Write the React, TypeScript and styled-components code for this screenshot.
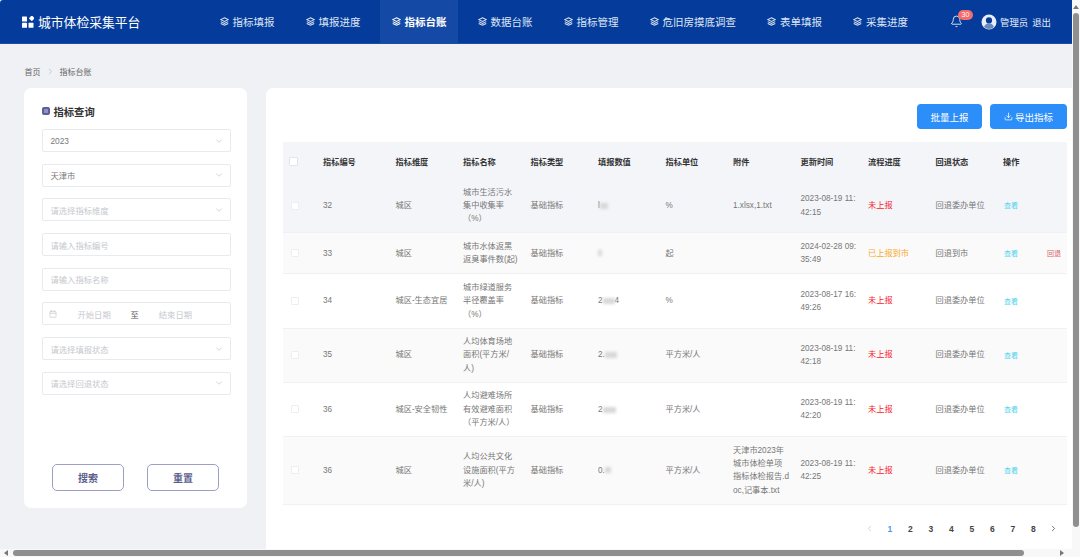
import React from 'react'
import styled, { createGlobalStyle } from 'styled-components'
import { Bell, ChevronDown, ChevronLeft, ChevronRight, Calendar, Download } from 'lucide-react'

const GlobalStyle = createGlobalStyle`
    html, body {
        margin: 0;
        padding: 0;
        background: #fff;
        overflow: hidden;
    }
    * {
        box-sizing: border-box;
    }
    body {
        font-family: "Liberation Sans", "Noto Sans CJK SC", sans-serif;
    }
`

const Screen = styled.div`
    display: grid;
    grid-template-columns: 1fr 8px;
    grid-template-rows: 549px 8px;
    width: 1080px;
    height: 557px;
    overflow: hidden;
`

const Page = styled.div`
    background: #f0f1f4;
    display: flex;
    flex-direction: column;
    min-width: 0;
`

const Header = styled.header`
    align-items: stretch;
    background: #053c9b;
    border-bottom: 1px solid #1a4fa8;
    border-top-left-radius: 3px;
    display: flex;
    flex: none;
    height: 44px;
`

const Brand = styled.div`
    align-items: center;
    color: #fff;
    display: flex;
    font-size: 12.8px;
    gap: 4px;
    padding-left: 22px;
    width: 208px;
`

const Nav = styled.nav`
    display: flex;
    gap: 8px;
`

const NavItem = styled.a<{ $active?: boolean }>`
    align-items: center;
    background: ${({ $active }) => ($active ? '#1549a6' : 'transparent')};
    color: ${({ $active }) => ($active ? '#fff' : '#dfe6f3')};
    display: flex;
    font-size: 10.5px;
    font-weight: ${({ $active }) => ($active ? 700 : 400)};
    gap: 4px;
    padding: 0 11.5px;
    white-space: nowrap;
`

const HeaderRight = styled.div`
    align-items: center;
    color: #e6ebf5;
    display: flex;
    font-size: 9.4px;
    margin-left: 30.5px;
`

const BellWrap = styled.div`
    color: #fff;
    display: flex;
    margin-right: 18px;
    position: relative;
`

const Badge = styled.span`
    background: #f56c6c;
    border-radius: 6px;
    color: #fff;
    font-size: 7px;
    height: 10px;
    left: 8px;
    line-height: 10px;
    position: absolute;
    text-align: center;
    top: -5px;
    width: 15px;
`

const UserName = styled.span`
    margin: 0 4px 0 3px;
`

const Breadcrumb = styled.div`
    align-items: center;
    color: #666;
    display: flex;
    flex: none;
    font-size: 8px;
    gap: 5px;
    height: 44px;
    padding: 10px 0 0 24.5px;
`

const Content = styled.div`
    display: flex;
    flex: 1;
    gap: 19px;
    min-height: 0;
    padding-left: 24px;
`

const Sidebar = styled.aside`
    background: #fff;
    border-radius: 7px;
    display: flex;
    flex: none;
    flex-direction: column;
    height: 420px;
    padding: 16px 16px 17px 17.5px;
    width: 223px;
`

const SideTitle = styled.h2`
    align-items: center;
    color: #333;
    display: flex;
    font-size: 10.3px;
    font-weight: 700;
    gap: 4px;
    height: 14px;
    margin: 0 0 11px;
`

const TitleMark = styled.span`
    background: #8f92c0;
    border: 2px solid #5a5e9c;
    border-radius: 2px;
    height: 8px;
    width: 8px;
`

const Fields = styled.div`
    display: flex;
    flex-direction: column;
    gap: 11.7px;
`

const Field = styled.div<{ $filled?: boolean }>`
    align-items: center;
    background: #fff;
    border: 1px solid #e9eaee;
    border-radius: 2px;
    color: ${({ $filled }) => ($filled ? '#777' : '#c6c8cd')};
    display: flex;
    font-size: 8.3px;
    height: 23px;
    justify-content: space-between;
    padding: 0 6px 0 8px;
`

const DateField = styled(Field)`
    justify-content: flex-start;
    padding-left: 6px;
`

const DateText = styled.span`
    flex: none;
    text-align: center;
    white-space: nowrap;
    width: 33px;
`

const DateTo = styled.span`
    color: #555;
    margin: 0 20px;
`

const CalendarIcon = styled(Calendar)`
    color: #c6c8cd;
    flex: none;
    margin-right: 21px;
`

const SideActions = styled.div`
    display: flex;
    gap: 23px;
    margin-top: auto;
    padding-left: 10.5px;
`

const OutlineButton = styled.button`
    background: #fff;
    border: 1px solid #9c9ec6;
    border-bottom-width: 1.5px;
    border-radius: 5px;
    color: #5c5f8c;
    font-family: inherit;
    font-size: 10px;
    font-weight: 700;
    height: 27px;
    padding: 0;
    width: 72px;
`

const Main = styled.main`
    background: #fff;
    border-radius: 7px 0 0 0;
    display: flex;
    flex: 1;
    flex-direction: column;
    min-width: 0;
    padding: 16px 5px 0 17px;
`

const Toolbar = styled.div`
    display: flex;
    gap: 8px;
    height: 25px;
    justify-content: flex-end;
    margin-bottom: 13px;
`

const PrimaryButton = styled.button<{ $w: number }>`
    align-items: center;
    background: #2b8ef9;
    border: 0;
    border-radius: 4px;
    color: #fff;
    display: flex;
    font-family: inherit;
    font-size: 9.5px;
    gap: 2px;
    justify-content: center;
    padding: 0;
    width: ${({ $w }) => $w}px;
`

const Table = styled.table`
    border-collapse: collapse;
    table-layout: fixed;
    width: 784px;
`

const HeadCell = styled.th`
    background: #f4f5f9;
    color: #333;
    font-size: 8.2px;
    font-weight: 700;
    height: 37px;
    padding: 0;
    text-align: left;
`

const Row = styled.tr<{ $bg: string }>`
    background: ${({ $bg }) => $bg};
    border-bottom: 1px solid #f1f1f3;
`

const Cell = styled.td`
    color: #777;
    font-size: 8.2px;
    line-height: 13.3px;
    padding: 6.7px 0;
    vertical-align: middle;
    white-space: pre-line;
`

const StatusText = styled.span<{ $color: string }>`
    color: ${({ $color }) => $color};
`

const ActionLinks = styled.div`
    display: flex;
    font-size: 7px;
    gap: 29px;
    padding: 1px 0 0 1px;
`

const ViewLink = styled.a`
    color: #4dd3ee;
`

const BackLink = styled.a`
    color: #d9646f;
`

const Check = styled.span<{ $head?: boolean }>`
    background: #fff;
    border: 1px solid ${({ $head }) => ($head ? '#e3e4e8' : '#eeeef0')};
    border-radius: 1px;
    display: block;
    height: ${({ $head }) => ($head ? '9px' : '8px')};
    margin: ${({ $head }) => ($head ? '1px 0 0 5.5px' : '0 0 0 8px')};
    width: ${({ $head }) => ($head ? '9px' : '8px')};
`

const Blurred = styled.span<{ $w: number }>`
    background: #d8d8da;
    display: inline-block;
    filter: blur(1.4px);
    height: 6px;
    vertical-align: middle;
    width: ${({ $w }) => $w}px;
`

const Pagination = styled.div`
    align-items: center;
    display: flex;
    height: 20px;
    justify-content: flex-end;
    margin-top: 14px;
    padding-right: 3px;
`

const PageItem = styled.span<{ $active?: boolean; $muted?: boolean }>`
    align-items: center;
    color: ${({ $active, $muted }) => ($active ? '#4a9bf0' : $muted ? '#c0c4cc' : '#444')};
    display: flex;
    font-size: 8.5px;
    font-weight: 700;
    height: 20px;
    justify-content: center;
    width: 20.5px;
`

const VTrack = styled.div`
    align-items: center;
    background: #f8f8f8;
    color: #777;
    display: flex;
    flex-direction: column;
    padding-top: 5px;
`

const VThumb = styled.div`
    background: #8f8f8f;
    border-radius: 3px;
    height: 514px;
    margin-top: 4px;
    width: 5.5px;
`

const HTrack = styled.div`
    align-items: center;
    background: #f8f8f8;
    color: #777;
    display: flex;
    grid-column: 1 / span 2;
    padding-left: 4px;
`

const HThumb = styled.div`
    background: #8f8f8f;
    border-radius: 3px;
    height: 5.5px;
    margin: 0 36px 0 5px;
    width: 1011px;
`

const ArrowUp = styled.span`
    border-bottom: 4px solid currentColor;
    border-left: 3px solid transparent;
    border-right: 3px solid transparent;
    height: 0;
    width: 0;
`

const ArrowLeft = styled.span`
    border-bottom: 3px solid transparent;
    border-right: 4px solid currentColor;
    border-top: 3px solid transparent;
    height: 0;
    width: 0;
`

const ArrowRight = styled.span`
    border-bottom: 3px solid transparent;
    border-left: 4px solid currentColor;
    border-top: 3px solid transparent;
    height: 0;
    width: 0;
`

const LogoMark = () => (
    <svg width="12" height="12" viewBox="0 0 12 12" fill="#fff">
        <rect x="0" y="0.5" width="5" height="5" rx="0.6" />
        <rect x="0" y="6.8" width="5" height="5" rx="0.6" />
        <rect x="6.5" y="6.8" width="5" height="5" rx="0.6" />
        <rect x="7.2" y="0" width="4.2" height="4.2" rx="0.6" transform="rotate(45 9.3 2.8)" />
    </svg>
)

const NavMark = () => (
    <svg width="9" height="9" viewBox="0 0 12 12" fill="none" stroke="currentColor" strokeWidth="1.4">
        <path d="M6 1 11 3.5 6 6 1 3.5Z" />
        <path d="M1 6.2 6 8.7 11 6.2" />
        <path d="M1 8.6 6 11 11 8.6" />
    </svg>
)

const UserMark = () => (
    <svg width="16" height="16" viewBox="0 0 16 16">
        <circle cx="8" cy="8" r="7.5" fill="#e9edf6" />
        <circle cx="8" cy="6.4" r="3.1" fill="#053c9b" />
        <path d="M3 13c.8-2.6 2.7-3.6 5-3.6s4.2 1 5 3.6a7 7 0 0 1-10 0Z" fill="#6d88bd" />
    </svg>
)

const navItems = ['指标填报', '填报进度', '指标台账', '数据台账', '指标管理', '危旧房摸底调查', '表单填报', '采集进度']

const columns = ['指标编号', '指标维度', '指标名称', '指标类型', '填报数值', '指标单位', '附件', '更新时间', '流程进度', '回退状态', '操作']
const colWidths = [40, 72.5, 67.5, 67.5, 67.5, 67.5, 67.5, 67.5, 67.5, 67.5, 67.5, 64]

type RowData = {
    id: string
    scope: string
    name: string
    value: [string, number, string?]
    unit: string
    file: string
    time: string
    status: string
    statusColor: string
    back: string
    canReturn?: boolean
    bg: string
}

const rows: RowData[] = [
    {
        id: '32', scope: '城区', name: '城市生活污水\n集中收集率\n（%）', value: ['l', 8], unit: '%', file: '1.xlsx,1.txt',
        time: '2023-08-19 11:\n42:15', status: '未上报', statusColor: '#f5222d', back: '回退委办单位', bg: '#f4f5f9',
    },
    {
        id: '33', scope: '城区', name: '城市水体返黑\n返臭事件数(起)', value: ['', 4], unit: '起', file: '',
        time: '2024-02-28 09:\n35:49', status: '已上报到市', statusColor: '#fba92c', back: '回退到市', canReturn: true, bg: '#fafafa',
    },
    {
        id: '34', scope: '城区-生态宜居', name: '城市绿道服务\n半径覆盖率\n（%）', value: ['2', 12, '4'], unit: '%', file: '',
        time: '2023-08-17 16:\n49:26', status: '未上报', statusColor: '#f5222d', back: '回退委办单位', bg: '#fff',
    },
    {
        id: '35', scope: '城区', name: '人均体育场地\n面积(平方米/\n人)', value: ['2.', 12], unit: '平方米/人', file: '',
        time: '2023-08-19 11:\n42:18', status: '未上报', statusColor: '#f5222d', back: '回退委办单位', bg: '#fafafa',
    },
    {
        id: '36', scope: '城区-安全韧性', name: '人均避难场所\n有效避难面积\n（平方米/人）', value: ['2', 13], unit: '平方米/人', file: '',
        time: '2023-08-19 11:\n42:20', status: '未上报', statusColor: '#f5222d', back: '回退委办单位', bg: '#fff',
    },
    {
        id: '36', scope: '城区', name: '人均公共文化\n设施面积(平方\n米/人)', value: ['0.', 6], unit: '平方米/人',
        file: '天津市2023年\n城市体检单项\n指标体检报告.d\noc,记事本.txt',
        time: '2023-08-19 11:\n42:25', status: '未上报', statusColor: '#f5222d', back: '回退委办单位', bg: '#fafafa',
    },
]

const selects: { text: string; filled?: boolean }[] = [
    { text: '2023', filled: true },
    { text: '天津市', filled: true },
    { text: '请选择指标维度' },
]

const App: React.FC = () => (
    <Screen>
        <GlobalStyle />
        <Page>
            <Header>
                <Brand>
                    <LogoMark />
                    城市体检采集平台
                </Brand>
                <Nav>
                    {navItems.map((item) => (
                        <NavItem key={item} $active={item === '指标台账'}>
                            <NavMark />
                            {item}
                        </NavItem>
                    ))}
                </Nav>
                <HeaderRight>
                    <BellWrap>
                        <Bell size={13} strokeWidth={1.5} />
                        <Badge>30</Badge>
                    </BellWrap>
                    <UserMark />
                    <UserName>管理员</UserName>
                    退出
                </HeaderRight>
            </Header>
            <Breadcrumb>
                首页
                <ChevronRight size={9} color="#bbb" />
                指标台账
            </Breadcrumb>
            <Content>
                <Sidebar>
                    <SideTitle>
                        <TitleMark />
                        指标查询
                    </SideTitle>
                    <Fields>
                        {selects.map((s) => (
                            <Field key={s.text} $filled={s.filled}>
                                {s.text}
                                <ChevronDown size={10} color="#ccc" />
                            </Field>
                        ))}
                        <Field>请输入指标编号</Field>
                        <Field>请输入指标名称</Field>
                        <DateField>
                            <CalendarIcon size={8} />
                            <DateText>开始日期</DateText>
                            <DateTo>至</DateTo>
                            <DateText>结束日期</DateText>
                        </DateField>
                        <Field>
                            请选择填报状态
                            <ChevronDown size={10} color="#ccc" />
                        </Field>
                        <Field>
                            请选择回退状态
                            <ChevronDown size={10} color="#ccc" />
                        </Field>
                    </Fields>
                    <SideActions>
                        <OutlineButton>搜索</OutlineButton>
                        <OutlineButton>重置</OutlineButton>
                    </SideActions>
                </Sidebar>
                <Main>
                    <Toolbar>
                        <PrimaryButton $w={65}>批量上报</PrimaryButton>
                        <PrimaryButton $w={77}>
                            <Download size={9} />
                            导出指标
                        </PrimaryButton>
                    </Toolbar>
                    <Table>
                        <colgroup>
                            {colWidths.map((w, i) => (
                                <col key={i} width={w} />
                            ))}
                        </colgroup>
                        <thead>
                            <tr>
                                <HeadCell>
                                    <Check $head />
                                </HeadCell>
                                {columns.map((c) => (
                                    <HeadCell key={c}>{c}</HeadCell>
                                ))}
                                <HeadCell />
                            </tr>
                        </thead>
                        <tbody>
                            {rows.map((r) => (
                                <Row key={r.time} $bg={r.bg}>
                                    <Cell>
                                        <Check />
                                    </Cell>
                                    <Cell>{r.id}</Cell>
                                    <Cell>{r.scope}</Cell>
                                    <Cell>{r.name}</Cell>
                                    <Cell>基础指标</Cell>
                                    <Cell>
                                        {r.value[0]}
                                        <Blurred $w={r.value[1]} />
                                        {r.value[2]}
                                    </Cell>
                                    <Cell>{r.unit}</Cell>
                                    <Cell>{r.file}</Cell>
                                    <Cell>{r.time}</Cell>
                                    <Cell>
                                        <StatusText $color={r.statusColor}>{r.status}</StatusText>
                                    </Cell>
                                    <Cell>{r.back}</Cell>
                                    <Cell colSpan={2}>
                                        <ActionLinks>
                                            <ViewLink>查看</ViewLink>
                                            {r.canReturn && <BackLink>回退</BackLink>}
                                        </ActionLinks>
                                    </Cell>
                                </Row>
                            ))}
                        </tbody>
                    </Table>
                    <Pagination>
                        <PageItem $muted>
                            <ChevronLeft size={9} />
                        </PageItem>
                        {[1, 2, 3, 4, 5, 6, 7, 8].map((n) => (
                            <PageItem key={n} $active={n === 1}>
                                {n}
                            </PageItem>
                        ))}
                        <PageItem>
                            <ChevronRight size={9} />
                        </PageItem>
                    </Pagination>
                </Main>
            </Content>
        </Page>
        <VTrack>
            <ArrowUp />
            <VThumb />
        </VTrack>
        <HTrack>
            <ArrowLeft />
            <HThumb />
            <ArrowRight />
        </HTrack>
    </Screen>
)

export default App
